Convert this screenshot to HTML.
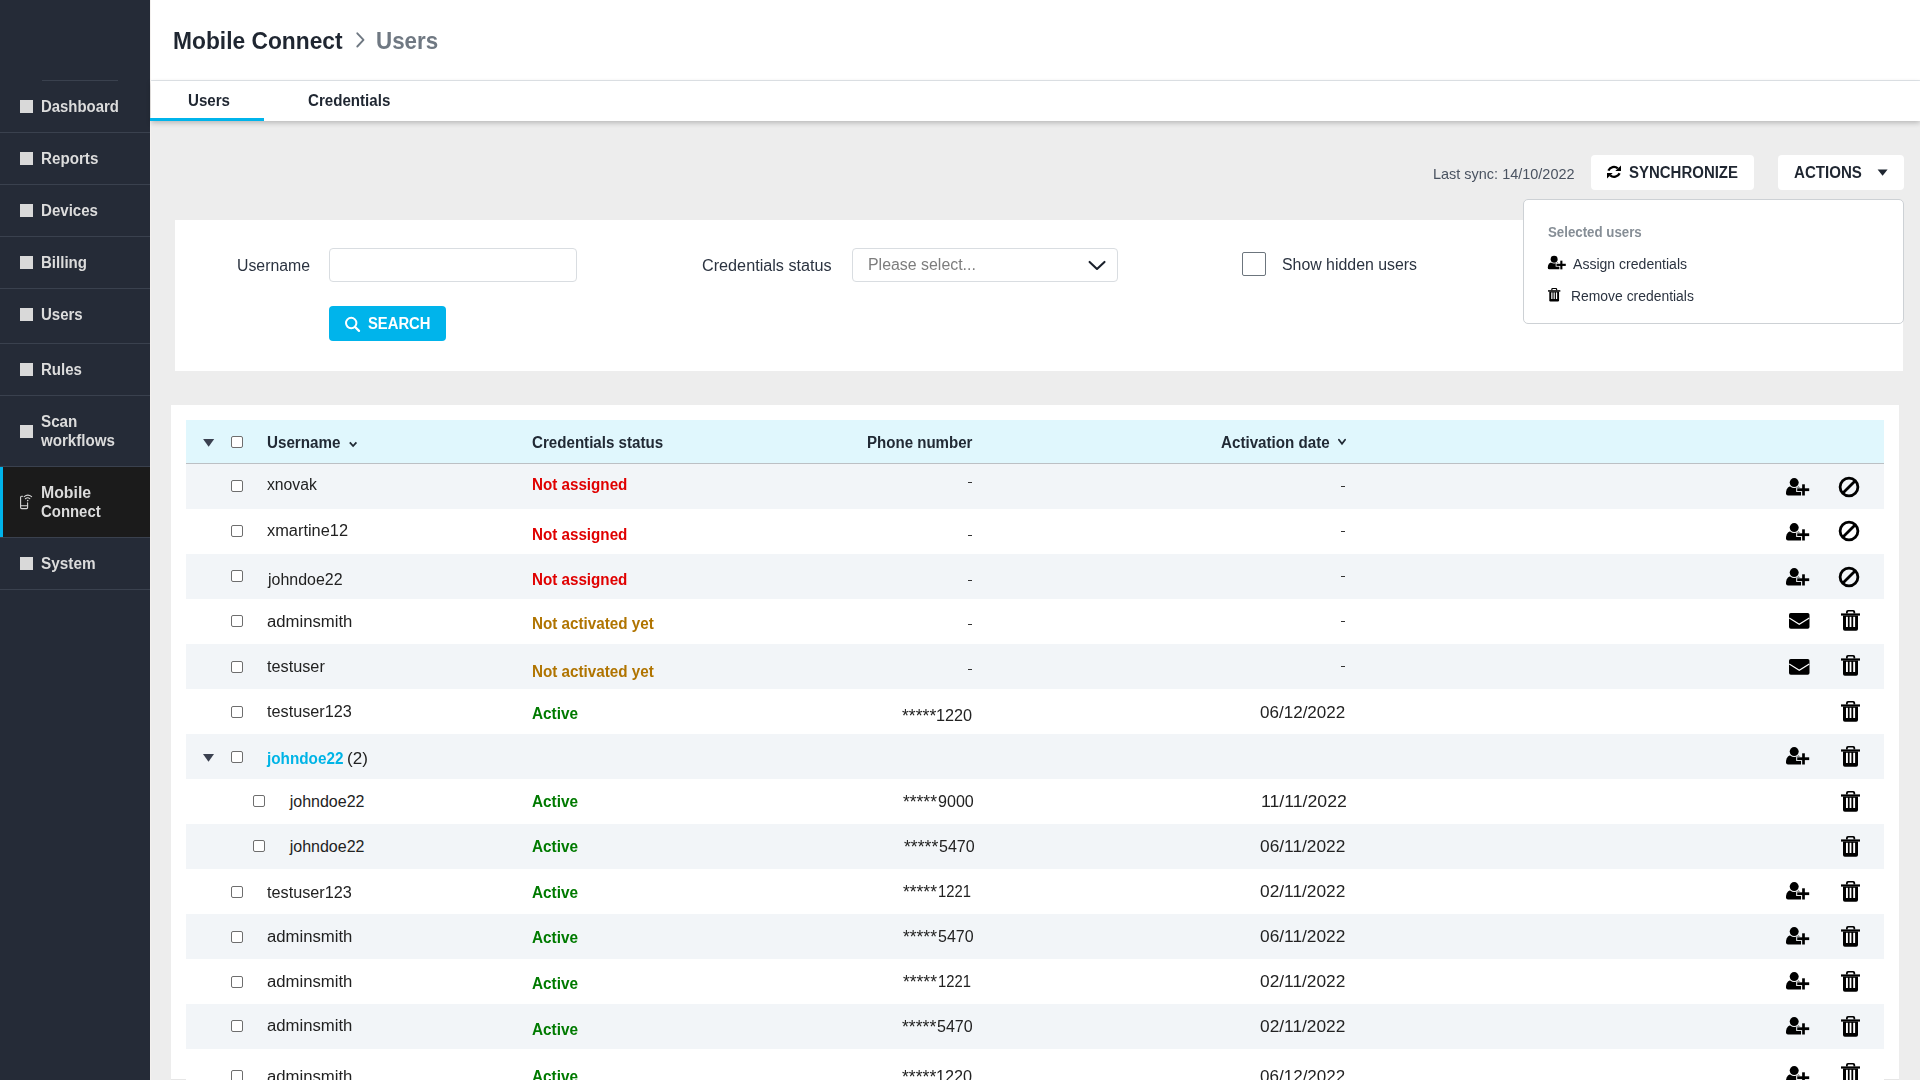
<!DOCTYPE html>
<html><head><meta charset="utf-8"><title>Mobile Connect - Users</title>
<style>
html,body{margin:0;padding:0;width:1920px;height:1080px;overflow:hidden;background:#ededed;font-family:"Liberation Sans",sans-serif;}
</style></head><body>
<div style="position:absolute;left:0px;top:0px;width:150px;height:1080px;background:#252b37;"></div>
<div style="position:absolute;left:150px;top:0px;width:1px;height:1080px;background:#f4f1ef;"></div>
<div style="position:absolute;left:42px;top:80px;width:76px;height:1px;background:#3a414e;"></div>
<div style="position:absolute;left:0px;top:132px;width:150px;height:1px;background:#3a414e;"></div>
<div style="position:absolute;left:0px;top:184px;width:150px;height:1px;background:#3a414e;"></div>
<div style="position:absolute;left:0px;top:236px;width:150px;height:1px;background:#3a414e;"></div>
<div style="position:absolute;left:0px;top:288px;width:150px;height:1px;background:#3a414e;"></div>
<div style="position:absolute;left:0px;top:343px;width:150px;height:1px;background:#3a414e;"></div>
<div style="position:absolute;left:0px;top:395px;width:150px;height:1px;background:#3a414e;"></div>
<div style="position:absolute;left:0px;top:466px;width:150px;height:1px;background:#3a414e;"></div>
<div style="position:absolute;left:0px;top:537px;width:150px;height:1px;background:#3a414e;"></div>
<div style="position:absolute;left:0px;top:589px;width:150px;height:1px;background:#3a414e;"></div>
<div style="position:absolute;left:0px;top:467px;width:150px;height:70px;background:#1b1b1b;"></div>
<div style="position:absolute;left:0px;top:467px;width:3px;height:70px;background:#00b4eb;"></div>
<div style="position:absolute;left:20px;top:100px;width:13px;height:13px;background:#d9d9d9;"></div>
<div style="position:absolute;left:20px;top:152px;width:13px;height:13px;background:#d9d9d9;"></div>
<div style="position:absolute;left:20px;top:204px;width:13px;height:13px;background:#d9d9d9;"></div>
<div style="position:absolute;left:20px;top:256px;width:13px;height:13px;background:#d9d9d9;"></div>
<div style="position:absolute;left:20px;top:308px;width:13px;height:13px;background:#d9d9d9;"></div>
<div style="position:absolute;left:20px;top:363px;width:13px;height:13px;background:#d9d9d9;"></div>
<div style="position:absolute;left:20px;top:425px;width:13px;height:13px;background:#d9d9d9;"></div>
<div style="position:absolute;left:20px;top:557px;width:13px;height:13px;background:#d9d9d9;"></div>
<svg style="position:absolute;left:14px;top:488px;" width="26" height="26" viewBox="0 0 26 26"><g fill="none" stroke="#d6d6d6" stroke-width="1.1" stroke-linecap="round"><path d="M8.6 8.3 H7.6 Q6.6 8.3 6.6 9.3 V19.6 Q6.6 20.6 7.6 20.6 H12.6 Q13.6 20.6 13.6 19.6 V14.8"/><path d="M6.6 17.8 H13.6"/><path d="M10.2 8.6 Q13.8 5.6 17.6 8.6"/><path d="M11.4 10.7 Q13.7 8.9 15.8 10.7"/></g><circle cx="13.7" cy="12.6" r="0.8" fill="#d6d6d6"/></svg>
<div style="position:absolute;left:151px;top:0px;width:1769px;height:80px;background:#ffffff;"></div>
<div style="position:absolute;left:151px;top:80px;width:1769px;height:1px;background:#e2e7eb;"></div>
<svg style="position:absolute;left:350px;top:30px;" width="20" height="24" viewBox="0 0 20 24"><polyline points="7.3,3.3 13.5,9.9 7.3,16.5" fill="none" stroke="#6f7882" stroke-width="1.9" stroke-linecap="round" stroke-linejoin="round"/></svg>
<div style="position:absolute;left:151px;top:81px;width:1769px;height:40px;background:#ffffff;box-shadow:0 2px 5px rgba(0,0,0,0.22);"></div>
<div style="position:absolute;left:150px;top:118px;width:114px;height:3px;background:#00b4eb;"></div>
<div style="position:absolute;left:1591px;top:155px;width:163px;height:35px;background:#ffffff;border-radius:4px;"></div>
<svg style="position:absolute;left:1605px;top:163px;" width="18" height="18" viewBox="0 0 18 18"><g transform="translate(2,2)"><path d="M1.4 5.6 A6 6 0 0 1 10.8 3.4" fill="none" stroke="#000" stroke-width="2.3"/><polygon points="8.3,5.9 14,5.9 14,0.6" fill="#000"/><path d="M12.6 8.2 A6 6 0 0 1 3.2 10.4" fill="none" stroke="#000" stroke-width="2.3"/><polygon points="5.7,7.9 0,7.9 0,13.4" fill="#000"/></g></svg>
<div style="position:absolute;left:1778px;top:155px;width:126px;height:35px;background:#ffffff;border-radius:4px;"></div>
<svg style="position:absolute;left:1876px;top:168px;" width="13" height="9" viewBox="0 0 13 9"><polygon points="1.6,1.6 11.6,1.6 6.6,7.8" fill="#1f2631"/></svg>
<div style="position:absolute;left:175px;top:220px;width:1728px;height:151px;background:#ffffff;"></div>
<div style="position:absolute;left:329px;top:248px;width:248px;height:34px;background:#ffffff;box-sizing:border-box;border:1px solid #d9dde1;border-radius:4px;"></div>
<div style="position:absolute;left:329px;top:306px;width:117px;height:35px;background:#00b4eb;border-radius:4px;"></div>
<svg style="position:absolute;left:340px;top:312px;" width="24" height="24" viewBox="0 0 24 24"><circle cx="11.2" cy="11.05" r="5.2" fill="none" stroke="#fff" stroke-width="2"/><line x1="15.1" y1="15.0" x2="19" y2="18.9" stroke="#fff" stroke-width="2.3" stroke-linecap="round"/></svg>
<div style="position:absolute;left:852px;top:248px;width:266px;height:34px;background:#ffffff;box-sizing:border-box;border:1px solid #d9dde1;border-radius:4px;"></div>
<svg style="position:absolute;left:1084px;top:254px;" width="26" height="22" viewBox="0 0 26 22"><polyline points="5.6,7.9 13,15 20.5,7.9" fill="none" stroke="#1a202b" stroke-width="2.1" stroke-linecap="round" stroke-linejoin="round"/></svg>
<div style="position:absolute;left:1242px;top:252px;width:24px;height:24px;background:#ffffff;box-sizing:border-box;border:1px solid #6c757d;border-radius:2px;"></div>
<div style="position:absolute;left:1523px;top:199px;width:381px;height:125px;background:#ffffff;box-sizing:border-box;border:1px solid #cdd1d5;border-radius:5px;"></div>
<div style="position:absolute;left:171px;top:405px;width:1728px;height:675px;background:#ffffff;"></div>
<div style="position:absolute;left:186px;top:420px;width:1698px;height:43px;background:#e0f7fd;"></div>
<div style="position:absolute;left:186px;top:463px;width:1698px;height:1px;background:#bcc0c4;"></div>
<div style="position:absolute;left:186px;top:464px;width:1698px;height:45px;background:#f2f5f8;"></div>
<div style="position:absolute;left:186px;top:554px;width:1698px;height:45px;background:#f2f5f8;"></div>
<div style="position:absolute;left:186px;top:644px;width:1698px;height:45px;background:#f2f5f8;"></div>
<div style="position:absolute;left:186px;top:734px;width:1698px;height:45px;background:#f2f5f8;"></div>
<div style="position:absolute;left:186px;top:824px;width:1698px;height:45px;background:#f2f5f8;"></div>
<div style="position:absolute;left:186px;top:914px;width:1698px;height:45px;background:#f2f5f8;"></div>
<div style="position:absolute;left:186px;top:1004px;width:1698px;height:45px;background:#f2f5f8;"></div>
<div style="position:absolute;left:171px;top:1079px;width:15px;height:1px;background:#e6e6e6;"></div>
<div style="position:absolute;left:1884px;top:1079px;width:15px;height:1px;background:#e6e6e6;"></div>
<svg style="position:absolute;left:200px;top:436px;" width="18" height="14" viewBox="0 0 18 14"><polygon points="3.1,3 14.2,3 8.65,10.8" fill="#3b4150"/></svg>
<svg style="position:absolute;left:346px;top:438px;" width="14" height="12" viewBox="0 0 14 12"><polyline points="3.8,4.3 7.1,8 10.4,4.3" fill="none" stroke="#212a35" stroke-width="1.8"/></svg>
<svg style="position:absolute;left:1335px;top:436px;" width="14" height="12" viewBox="0 0 14 12"><polyline points="3.9,3.8 7.0,7.7 10.1,3.8" fill="none" stroke="#212a35" stroke-width="1.8" stroke-linecap="round"/></svg>
<div style="position:absolute;left:231px;top:436px;width:12px;height:12px;background:#ffffff;box-sizing:border-box;border:1.3px solid #6e6e6e;border-radius:2px;"></div>
<div style="position:absolute;left:231px;top:480px;width:12px;height:12px;background:#ffffff;box-sizing:border-box;border:1.3px solid #6e6e6e;border-radius:2px;"></div>
<div style="position:absolute;left:968px;top:482px;width:4px;height:1.4px;background:#333333;"></div>
<div style="position:absolute;left:1341px;top:486px;width:4px;height:1.4px;background:#333333;"></div>
<div style="position:absolute;left:231px;top:525px;width:12px;height:12px;background:#ffffff;box-sizing:border-box;border:1.3px solid #6e6e6e;border-radius:2px;"></div>
<div style="position:absolute;left:968px;top:535px;width:4px;height:1.4px;background:#333333;"></div>
<div style="position:absolute;left:1341px;top:531px;width:4px;height:1.4px;background:#333333;"></div>
<div style="position:absolute;left:231px;top:570px;width:12px;height:12px;background:#ffffff;box-sizing:border-box;border:1.3px solid #6e6e6e;border-radius:2px;"></div>
<div style="position:absolute;left:968px;top:580px;width:4px;height:1.4px;background:#333333;"></div>
<div style="position:absolute;left:1341px;top:576px;width:4px;height:1.4px;background:#333333;"></div>
<div style="position:absolute;left:231px;top:615px;width:12px;height:12px;background:#ffffff;box-sizing:border-box;border:1.3px solid #6e6e6e;border-radius:2px;"></div>
<div style="position:absolute;left:968px;top:624px;width:4px;height:1.4px;background:#333333;"></div>
<div style="position:absolute;left:1341px;top:621px;width:4px;height:1.4px;background:#333333;"></div>
<div style="position:absolute;left:231px;top:661px;width:12px;height:12px;background:#ffffff;box-sizing:border-box;border:1.3px solid #6e6e6e;border-radius:2px;"></div>
<div style="position:absolute;left:968px;top:669px;width:4px;height:1.4px;background:#333333;"></div>
<div style="position:absolute;left:1341px;top:666px;width:4px;height:1.4px;background:#333333;"></div>
<div style="position:absolute;left:231px;top:706px;width:12px;height:12px;background:#ffffff;box-sizing:border-box;border:1.3px solid #6e6e6e;border-radius:2px;"></div>
<div style="position:absolute;left:253px;top:795px;width:12px;height:12px;background:#ffffff;box-sizing:border-box;border:1.3px solid #6e6e6e;border-radius:2px;"></div>
<div style="position:absolute;left:253px;top:840px;width:12px;height:12px;background:#ffffff;box-sizing:border-box;border:1.3px solid #6e6e6e;border-radius:2px;"></div>
<div style="position:absolute;left:231px;top:886px;width:12px;height:12px;background:#ffffff;box-sizing:border-box;border:1.3px solid #6e6e6e;border-radius:2px;"></div>
<div style="position:absolute;left:231px;top:931px;width:12px;height:12px;background:#ffffff;box-sizing:border-box;border:1.3px solid #6e6e6e;border-radius:2px;"></div>
<div style="position:absolute;left:231px;top:976px;width:12px;height:12px;background:#ffffff;box-sizing:border-box;border:1.3px solid #6e6e6e;border-radius:2px;"></div>
<div style="position:absolute;left:231px;top:1020px;width:12px;height:12px;background:#ffffff;box-sizing:border-box;border:1.3px solid #6e6e6e;border-radius:2px;"></div>
<div style="position:absolute;left:231px;top:1070px;width:12px;height:12px;background:#ffffff;box-sizing:border-box;border:1.3px solid #6e6e6e;border-radius:2px;"></div>
<svg style="position:absolute;left:200px;top:750px;" width="18" height="14" viewBox="0 0 18 14"><polygon points="3,4 14,4 8.5,11.8" fill="#3b4150"/></svg>
<div style="position:absolute;left:231px;top:751px;width:12px;height:12px;background:#ffffff;box-sizing:border-box;border:1.3px solid #6e6e6e;border-radius:2px;"></div>
<svg style="position:absolute;left:1547.224px;top:254.724px;" width="20.176000000000002" height="15.52" viewBox="0 0 20.176000000000002 15.52"><defs><mask id="m15480_2555" maskUnits="userSpaceOnUse" x="0" y="0" width="26" height="20"><rect width="26" height="20" fill="#fff"/><rect x="16.2" y="6.3" width="4.5" height="14" fill="#000"/><rect x="11.2" y="10.4" width="14.6" height="4.6" fill="#000"/><circle cx="9.2" cy="5.6" r="5.4" fill="#000"/></mask></defs><g transform="scale(0.776)"><circle cx="9.2" cy="5.6" r="4.5" fill="#000"/><path mask="url(#m15480_2555)" d="M1 16.4 C1 12 3 9.3 6.6 9.3 L11.6 9.3 C14.4 9.3 16.3 11 16.3 13.4 L16.3 18.5 L3 18.5 Q1 18.5 1 16.4 Z" fill="#000"/><rect x="17.15" y="7.3" width="2.7" height="11.2" fill="#000"/><rect x="12.2" y="11.3" width="12" height="2.8" fill="#000"/></g></svg>
<svg style="position:absolute;left:1548.2px;top:288px;" width="12.35" height="13.65" viewBox="0 0 12.35 13.65"><g transform="scale(0.65)"><path d="M5 3.6 V2 Q5 0 7 0 H12.2 Q14.2 0 14.2 2 V3.6 H12.4 V2.2 Q12.4 1.4 11.6 1.4 H7.6 Q6.8 1.4 6.8 2.2 V3.6 Z" fill="#000"/><rect x="0" y="3.4" width="19" height="2.2" fill="#000"/><path d="M2 5.4 H17 V19 Q17 20.8 15.2 20.8 H3.8 Q2 20.8 2 19 Z" fill="#000"/><rect x="5" y="6.8" width="1.9" height="10.2" fill="#fff"/><rect x="8.6" y="6.8" width="1.8" height="10.2" fill="#fff"/><rect x="12.2" y="6.8" width="1.9" height="10.2" fill="#fff"/></g></svg>
<svg style="position:absolute;left:1784.8px;top:476.9px;" width="26.0" height="20.0" viewBox="0 0 26.0 20.0"><defs><mask id="m17858_4779" maskUnits="userSpaceOnUse" x="0" y="0" width="26" height="20"><rect width="26" height="20" fill="#fff"/><rect x="16.2" y="6.3" width="4.5" height="14" fill="#000"/><rect x="11.2" y="10.4" width="14.6" height="4.6" fill="#000"/><circle cx="9.2" cy="5.6" r="5.4" fill="#000"/></mask></defs><g transform="scale(1.0)"><circle cx="9.2" cy="5.6" r="4.5" fill="#000"/><path mask="url(#m17858_4779)" d="M1 16.4 C1 12 3 9.3 6.6 9.3 L11.6 9.3 C14.4 9.3 16.3 11 16.3 13.4 L16.3 18.5 L3 18.5 Q1 18.5 1 16.4 Z" fill="#000"/><rect x="17.15" y="7.3" width="2.7" height="11.2" fill="#000"/><rect x="12.2" y="11.3" width="12" height="2.8" fill="#000"/></g></svg>
<svg style="position:absolute;left:1837.3px;top:475.4px;" width="24" height="24" viewBox="0 0 24 24"><circle cx="12" cy="12" r="8.9" fill="none" stroke="#000" stroke-width="2.8"/><line x1="18.3" y1="5.7" x2="5.7" y2="18.3" stroke="#000" stroke-width="2.8"/></svg>
<svg style="position:absolute;left:1784.8px;top:521.9px;" width="26.0" height="20.0" viewBox="0 0 26.0 20.0"><defs><mask id="m17858_5229" maskUnits="userSpaceOnUse" x="0" y="0" width="26" height="20"><rect width="26" height="20" fill="#fff"/><rect x="16.2" y="6.3" width="4.5" height="14" fill="#000"/><rect x="11.2" y="10.4" width="14.6" height="4.6" fill="#000"/><circle cx="9.2" cy="5.6" r="5.4" fill="#000"/></mask></defs><g transform="scale(1.0)"><circle cx="9.2" cy="5.6" r="4.5" fill="#000"/><path mask="url(#m17858_5229)" d="M1 16.4 C1 12 3 9.3 6.6 9.3 L11.6 9.3 C14.4 9.3 16.3 11 16.3 13.4 L16.3 18.5 L3 18.5 Q1 18.5 1 16.4 Z" fill="#000"/><rect x="17.15" y="7.3" width="2.7" height="11.2" fill="#000"/><rect x="12.2" y="11.3" width="12" height="2.8" fill="#000"/></g></svg>
<svg style="position:absolute;left:1837.3px;top:519.3px;" width="24" height="24" viewBox="0 0 24 24"><circle cx="12" cy="12" r="8.9" fill="none" stroke="#000" stroke-width="2.8"/><line x1="18.3" y1="5.7" x2="5.7" y2="18.3" stroke="#000" stroke-width="2.8"/></svg>
<svg style="position:absolute;left:1784.8px;top:566.9px;" width="26.0" height="20.0" viewBox="0 0 26.0 20.0"><defs><mask id="m17858_5679" maskUnits="userSpaceOnUse" x="0" y="0" width="26" height="20"><rect width="26" height="20" fill="#fff"/><rect x="16.2" y="6.3" width="4.5" height="14" fill="#000"/><rect x="11.2" y="10.4" width="14.6" height="4.6" fill="#000"/><circle cx="9.2" cy="5.6" r="5.4" fill="#000"/></mask></defs><g transform="scale(1.0)"><circle cx="9.2" cy="5.6" r="4.5" fill="#000"/><path mask="url(#m17858_5679)" d="M1 16.4 C1 12 3 9.3 6.6 9.3 L11.6 9.3 C14.4 9.3 16.3 11 16.3 13.4 L16.3 18.5 L3 18.5 Q1 18.5 1 16.4 Z" fill="#000"/><rect x="17.15" y="7.3" width="2.7" height="11.2" fill="#000"/><rect x="12.2" y="11.3" width="12" height="2.8" fill="#000"/></g></svg>
<svg style="position:absolute;left:1837.3px;top:565.4px;" width="24" height="24" viewBox="0 0 24 24"><circle cx="12" cy="12" r="8.9" fill="none" stroke="#000" stroke-width="2.8"/><line x1="18.3" y1="5.7" x2="5.7" y2="18.3" stroke="#000" stroke-width="2.8"/></svg>
<svg style="position:absolute;left:1788.75px;top:612.5px;" width="21" height="16" viewBox="0 0 21 16"><rect x="0" y="0" width="20.5" height="15.8" rx="1.8" fill="#000"/><polyline points="0.2,5 10.25,11.3 20.3,5" fill="none" stroke="#fff" stroke-width="1.2"/></svg>
<svg style="position:absolute;left:1841px;top:610px;" width="19.0" height="21.0" viewBox="0 0 19.0 21.0"><g transform="scale(1.0)"><path d="M5 3.6 V2 Q5 0 7 0 H12.2 Q14.2 0 14.2 2 V3.6 H12.4 V2.2 Q12.4 1.4 11.6 1.4 H7.6 Q6.8 1.4 6.8 2.2 V3.6 Z" fill="#000"/><rect x="0" y="3.4" width="19" height="2.2" fill="#000"/><path d="M2 5.4 H17 V19 Q17 20.8 15.2 20.8 H3.8 Q2 20.8 2 19 Z" fill="#000"/><rect x="5" y="6.8" width="1.9" height="10.2" fill="#fff"/><rect x="8.6" y="6.8" width="1.8" height="10.2" fill="#fff"/><rect x="12.2" y="6.8" width="1.9" height="10.2" fill="#fff"/></g></svg>
<svg style="position:absolute;left:1788.75px;top:658.75px;" width="21" height="16" viewBox="0 0 21 16"><rect x="0" y="0" width="20.5" height="15.8" rx="1.8" fill="#000"/><polyline points="0.2,5 10.25,11.3 20.3,5" fill="none" stroke="#fff" stroke-width="1.2"/></svg>
<svg style="position:absolute;left:1841px;top:655px;" width="19.0" height="21.0" viewBox="0 0 19.0 21.0"><g transform="scale(1.0)"><path d="M5 3.6 V2 Q5 0 7 0 H12.2 Q14.2 0 14.2 2 V3.6 H12.4 V2.2 Q12.4 1.4 11.6 1.4 H7.6 Q6.8 1.4 6.8 2.2 V3.6 Z" fill="#000"/><rect x="0" y="3.4" width="19" height="2.2" fill="#000"/><path d="M2 5.4 H17 V19 Q17 20.8 15.2 20.8 H3.8 Q2 20.8 2 19 Z" fill="#000"/><rect x="5" y="6.8" width="1.9" height="10.2" fill="#fff"/><rect x="8.6" y="6.8" width="1.8" height="10.2" fill="#fff"/><rect x="12.2" y="6.8" width="1.9" height="10.2" fill="#fff"/></g></svg>
<svg style="position:absolute;left:1841px;top:700.8px;" width="19.0" height="21.0" viewBox="0 0 19.0 21.0"><g transform="scale(1.0)"><path d="M5 3.6 V2 Q5 0 7 0 H12.2 Q14.2 0 14.2 2 V3.6 H12.4 V2.2 Q12.4 1.4 11.6 1.4 H7.6 Q6.8 1.4 6.8 2.2 V3.6 Z" fill="#000"/><rect x="0" y="3.4" width="19" height="2.2" fill="#000"/><path d="M2 5.4 H17 V19 Q17 20.8 15.2 20.8 H3.8 Q2 20.8 2 19 Z" fill="#000"/><rect x="5" y="6.8" width="1.9" height="10.2" fill="#fff"/><rect x="8.6" y="6.8" width="1.8" height="10.2" fill="#fff"/><rect x="12.2" y="6.8" width="1.9" height="10.2" fill="#fff"/></g></svg>
<svg style="position:absolute;left:1785.0px;top:746.1px;" width="26.0" height="20.0" viewBox="0 0 26.0 20.0"><defs><mask id="m17860_7471" maskUnits="userSpaceOnUse" x="0" y="0" width="26" height="20"><rect width="26" height="20" fill="#fff"/><rect x="16.2" y="6.3" width="4.5" height="14" fill="#000"/><rect x="11.2" y="10.4" width="14.6" height="4.6" fill="#000"/><circle cx="9.2" cy="5.6" r="5.4" fill="#000"/></mask></defs><g transform="scale(1.0)"><circle cx="9.2" cy="5.6" r="4.5" fill="#000"/><path mask="url(#m17860_7471)" d="M1 16.4 C1 12 3 9.3 6.6 9.3 L11.6 9.3 C14.4 9.3 16.3 11 16.3 13.4 L16.3 18.5 L3 18.5 Q1 18.5 1 16.4 Z" fill="#000"/><rect x="17.15" y="7.3" width="2.7" height="11.2" fill="#000"/><rect x="12.2" y="11.3" width="12" height="2.8" fill="#000"/></g></svg>
<svg style="position:absolute;left:1841px;top:746px;" width="19.0" height="21.0" viewBox="0 0 19.0 21.0"><g transform="scale(1.0)"><path d="M5 3.6 V2 Q5 0 7 0 H12.2 Q14.2 0 14.2 2 V3.6 H12.4 V2.2 Q12.4 1.4 11.6 1.4 H7.6 Q6.8 1.4 6.8 2.2 V3.6 Z" fill="#000"/><rect x="0" y="3.4" width="19" height="2.2" fill="#000"/><path d="M2 5.4 H17 V19 Q17 20.8 15.2 20.8 H3.8 Q2 20.8 2 19 Z" fill="#000"/><rect x="5" y="6.8" width="1.9" height="10.2" fill="#fff"/><rect x="8.6" y="6.8" width="1.8" height="10.2" fill="#fff"/><rect x="12.2" y="6.8" width="1.9" height="10.2" fill="#fff"/></g></svg>
<svg style="position:absolute;left:1841px;top:791px;" width="19.0" height="21.0" viewBox="0 0 19.0 21.0"><g transform="scale(1.0)"><path d="M5 3.6 V2 Q5 0 7 0 H12.2 Q14.2 0 14.2 2 V3.6 H12.4 V2.2 Q12.4 1.4 11.6 1.4 H7.6 Q6.8 1.4 6.8 2.2 V3.6 Z" fill="#000"/><rect x="0" y="3.4" width="19" height="2.2" fill="#000"/><path d="M2 5.4 H17 V19 Q17 20.8 15.2 20.8 H3.8 Q2 20.8 2 19 Z" fill="#000"/><rect x="5" y="6.8" width="1.9" height="10.2" fill="#fff"/><rect x="8.6" y="6.8" width="1.8" height="10.2" fill="#fff"/><rect x="12.2" y="6.8" width="1.9" height="10.2" fill="#fff"/></g></svg>
<svg style="position:absolute;left:1841px;top:836px;" width="19.0" height="21.0" viewBox="0 0 19.0 21.0"><g transform="scale(1.0)"><path d="M5 3.6 V2 Q5 0 7 0 H12.2 Q14.2 0 14.2 2 V3.6 H12.4 V2.2 Q12.4 1.4 11.6 1.4 H7.6 Q6.8 1.4 6.8 2.2 V3.6 Z" fill="#000"/><rect x="0" y="3.4" width="19" height="2.2" fill="#000"/><path d="M2 5.4 H17 V19 Q17 20.8 15.2 20.8 H3.8 Q2 20.8 2 19 Z" fill="#000"/><rect x="5" y="6.8" width="1.9" height="10.2" fill="#fff"/><rect x="8.6" y="6.8" width="1.8" height="10.2" fill="#fff"/><rect x="12.2" y="6.8" width="1.9" height="10.2" fill="#fff"/></g></svg>
<svg style="position:absolute;left:1785.0px;top:881.1px;" width="26.0" height="20.0" viewBox="0 0 26.0 20.0"><defs><mask id="m17860_8821" maskUnits="userSpaceOnUse" x="0" y="0" width="26" height="20"><rect width="26" height="20" fill="#fff"/><rect x="16.2" y="6.3" width="4.5" height="14" fill="#000"/><rect x="11.2" y="10.4" width="14.6" height="4.6" fill="#000"/><circle cx="9.2" cy="5.6" r="5.4" fill="#000"/></mask></defs><g transform="scale(1.0)"><circle cx="9.2" cy="5.6" r="4.5" fill="#000"/><path mask="url(#m17860_8821)" d="M1 16.4 C1 12 3 9.3 6.6 9.3 L11.6 9.3 C14.4 9.3 16.3 11 16.3 13.4 L16.3 18.5 L3 18.5 Q1 18.5 1 16.4 Z" fill="#000"/><rect x="17.15" y="7.3" width="2.7" height="11.2" fill="#000"/><rect x="12.2" y="11.3" width="12" height="2.8" fill="#000"/></g></svg>
<svg style="position:absolute;left:1841px;top:881px;" width="19.0" height="21.0" viewBox="0 0 19.0 21.0"><g transform="scale(1.0)"><path d="M5 3.6 V2 Q5 0 7 0 H12.2 Q14.2 0 14.2 2 V3.6 H12.4 V2.2 Q12.4 1.4 11.6 1.4 H7.6 Q6.8 1.4 6.8 2.2 V3.6 Z" fill="#000"/><rect x="0" y="3.4" width="19" height="2.2" fill="#000"/><path d="M2 5.4 H17 V19 Q17 20.8 15.2 20.8 H3.8 Q2 20.8 2 19 Z" fill="#000"/><rect x="5" y="6.8" width="1.9" height="10.2" fill="#fff"/><rect x="8.6" y="6.8" width="1.8" height="10.2" fill="#fff"/><rect x="12.2" y="6.8" width="1.9" height="10.2" fill="#fff"/></g></svg>
<svg style="position:absolute;left:1785.0px;top:926.1px;" width="26.0" height="20.0" viewBox="0 0 26.0 20.0"><defs><mask id="m17860_9271" maskUnits="userSpaceOnUse" x="0" y="0" width="26" height="20"><rect width="26" height="20" fill="#fff"/><rect x="16.2" y="6.3" width="4.5" height="14" fill="#000"/><rect x="11.2" y="10.4" width="14.6" height="4.6" fill="#000"/><circle cx="9.2" cy="5.6" r="5.4" fill="#000"/></mask></defs><g transform="scale(1.0)"><circle cx="9.2" cy="5.6" r="4.5" fill="#000"/><path mask="url(#m17860_9271)" d="M1 16.4 C1 12 3 9.3 6.6 9.3 L11.6 9.3 C14.4 9.3 16.3 11 16.3 13.4 L16.3 18.5 L3 18.5 Q1 18.5 1 16.4 Z" fill="#000"/><rect x="17.15" y="7.3" width="2.7" height="11.2" fill="#000"/><rect x="12.2" y="11.3" width="12" height="2.8" fill="#000"/></g></svg>
<svg style="position:absolute;left:1841px;top:926px;" width="19.0" height="21.0" viewBox="0 0 19.0 21.0"><g transform="scale(1.0)"><path d="M5 3.6 V2 Q5 0 7 0 H12.2 Q14.2 0 14.2 2 V3.6 H12.4 V2.2 Q12.4 1.4 11.6 1.4 H7.6 Q6.8 1.4 6.8 2.2 V3.6 Z" fill="#000"/><rect x="0" y="3.4" width="19" height="2.2" fill="#000"/><path d="M2 5.4 H17 V19 Q17 20.8 15.2 20.8 H3.8 Q2 20.8 2 19 Z" fill="#000"/><rect x="5" y="6.8" width="1.9" height="10.2" fill="#fff"/><rect x="8.6" y="6.8" width="1.8" height="10.2" fill="#fff"/><rect x="12.2" y="6.8" width="1.9" height="10.2" fill="#fff"/></g></svg>
<svg style="position:absolute;left:1785.0px;top:971.1px;" width="26.0" height="20.0" viewBox="0 0 26.0 20.0"><defs><mask id="m17860_9721" maskUnits="userSpaceOnUse" x="0" y="0" width="26" height="20"><rect width="26" height="20" fill="#fff"/><rect x="16.2" y="6.3" width="4.5" height="14" fill="#000"/><rect x="11.2" y="10.4" width="14.6" height="4.6" fill="#000"/><circle cx="9.2" cy="5.6" r="5.4" fill="#000"/></mask></defs><g transform="scale(1.0)"><circle cx="9.2" cy="5.6" r="4.5" fill="#000"/><path mask="url(#m17860_9721)" d="M1 16.4 C1 12 3 9.3 6.6 9.3 L11.6 9.3 C14.4 9.3 16.3 11 16.3 13.4 L16.3 18.5 L3 18.5 Q1 18.5 1 16.4 Z" fill="#000"/><rect x="17.15" y="7.3" width="2.7" height="11.2" fill="#000"/><rect x="12.2" y="11.3" width="12" height="2.8" fill="#000"/></g></svg>
<svg style="position:absolute;left:1841px;top:971px;" width="19.0" height="21.0" viewBox="0 0 19.0 21.0"><g transform="scale(1.0)"><path d="M5 3.6 V2 Q5 0 7 0 H12.2 Q14.2 0 14.2 2 V3.6 H12.4 V2.2 Q12.4 1.4 11.6 1.4 H7.6 Q6.8 1.4 6.8 2.2 V3.6 Z" fill="#000"/><rect x="0" y="3.4" width="19" height="2.2" fill="#000"/><path d="M2 5.4 H17 V19 Q17 20.8 15.2 20.8 H3.8 Q2 20.8 2 19 Z" fill="#000"/><rect x="5" y="6.8" width="1.9" height="10.2" fill="#fff"/><rect x="8.6" y="6.8" width="1.8" height="10.2" fill="#fff"/><rect x="12.2" y="6.8" width="1.9" height="10.2" fill="#fff"/></g></svg>
<svg style="position:absolute;left:1785.0px;top:1016.0px;" width="26.0" height="20.0" viewBox="0 0 26.0 20.0"><defs><mask id="m17860_10170" maskUnits="userSpaceOnUse" x="0" y="0" width="26" height="20"><rect width="26" height="20" fill="#fff"/><rect x="16.2" y="6.3" width="4.5" height="14" fill="#000"/><rect x="11.2" y="10.4" width="14.6" height="4.6" fill="#000"/><circle cx="9.2" cy="5.6" r="5.4" fill="#000"/></mask></defs><g transform="scale(1.0)"><circle cx="9.2" cy="5.6" r="4.5" fill="#000"/><path mask="url(#m17860_10170)" d="M1 16.4 C1 12 3 9.3 6.6 9.3 L11.6 9.3 C14.4 9.3 16.3 11 16.3 13.4 L16.3 18.5 L3 18.5 Q1 18.5 1 16.4 Z" fill="#000"/><rect x="17.15" y="7.3" width="2.7" height="11.2" fill="#000"/><rect x="12.2" y="11.3" width="12" height="2.8" fill="#000"/></g></svg>
<svg style="position:absolute;left:1841px;top:1016px;" width="19.0" height="21.0" viewBox="0 0 19.0 21.0"><g transform="scale(1.0)"><path d="M5 3.6 V2 Q5 0 7 0 H12.2 Q14.2 0 14.2 2 V3.6 H12.4 V2.2 Q12.4 1.4 11.6 1.4 H7.6 Q6.8 1.4 6.8 2.2 V3.6 Z" fill="#000"/><rect x="0" y="3.4" width="19" height="2.2" fill="#000"/><path d="M2 5.4 H17 V19 Q17 20.8 15.2 20.8 H3.8 Q2 20.8 2 19 Z" fill="#000"/><rect x="5" y="6.8" width="1.9" height="10.2" fill="#fff"/><rect x="8.6" y="6.8" width="1.8" height="10.2" fill="#fff"/><rect x="12.2" y="6.8" width="1.9" height="10.2" fill="#fff"/></g></svg>
<svg style="position:absolute;left:1785.0px;top:1065.0px;" width="26.0" height="20.0" viewBox="0 0 26.0 20.0"><defs><mask id="m17860_10660" maskUnits="userSpaceOnUse" x="0" y="0" width="26" height="20"><rect width="26" height="20" fill="#fff"/><rect x="16.2" y="6.3" width="4.5" height="14" fill="#000"/><rect x="11.2" y="10.4" width="14.6" height="4.6" fill="#000"/><circle cx="9.2" cy="5.6" r="5.4" fill="#000"/></mask></defs><g transform="scale(1.0)"><circle cx="9.2" cy="5.6" r="4.5" fill="#000"/><path mask="url(#m17860_10660)" d="M1 16.4 C1 12 3 9.3 6.6 9.3 L11.6 9.3 C14.4 9.3 16.3 11 16.3 13.4 L16.3 18.5 L3 18.5 Q1 18.5 1 16.4 Z" fill="#000"/><rect x="17.15" y="7.3" width="2.7" height="11.2" fill="#000"/><rect x="12.2" y="11.3" width="12" height="2.8" fill="#000"/></g></svg>
<svg style="position:absolute;left:1841px;top:1063px;" width="19.0" height="21.0" viewBox="0 0 19.0 21.0"><g transform="scale(1.0)"><path d="M5 3.6 V2 Q5 0 7 0 H12.2 Q14.2 0 14.2 2 V3.6 H12.4 V2.2 Q12.4 1.4 11.6 1.4 H7.6 Q6.8 1.4 6.8 2.2 V3.6 Z" fill="#000"/><rect x="0" y="3.4" width="19" height="2.2" fill="#000"/><path d="M2 5.4 H17 V19 Q17 20.8 15.2 20.8 H3.8 Q2 20.8 2 19 Z" fill="#000"/><rect x="5" y="6.8" width="1.9" height="10.2" fill="#fff"/><rect x="8.6" y="6.8" width="1.8" height="10.2" fill="#fff"/><rect x="12.2" y="6.8" width="1.9" height="10.2" fill="#fff"/></g></svg>
<div style="position:absolute;left:40.97px;top:99px;font-size:16px;line-height:16px;font-weight:bold;color:#dcdcdc;white-space:pre;transform:scaleX(0.9325);transform-origin:0 0;">Dashboard</div>
<div style="position:absolute;left:40.75px;top:151px;font-size:16px;line-height:16px;font-weight:bold;color:#dcdcdc;white-space:pre;transform:scaleX(0.9481);transform-origin:0 0;">Reports</div>
<div style="position:absolute;left:40.86px;top:203px;font-size:16px;line-height:16px;font-weight:bold;color:#dcdcdc;white-space:pre;transform:scaleX(0.9424);transform-origin:0 0;">Devices</div>
<div style="position:absolute;left:40.86px;top:255px;font-size:16px;line-height:16px;font-weight:bold;color:#dcdcdc;white-space:pre;transform:scaleX(0.9404);transform-origin:0 0;">Billing</div>
<div style="position:absolute;left:41.10px;top:307px;font-size:16px;line-height:16px;font-weight:bold;color:#dcdcdc;white-space:pre;transform:scaleX(0.9372);transform-origin:0 0;">Users</div>
<div style="position:absolute;left:40.66px;top:362px;font-size:16px;line-height:16px;font-weight:bold;color:#dcdcdc;white-space:pre;transform:scaleX(0.9405);transform-origin:0 0;">Rules</div>
<div style="position:absolute;left:40.92px;top:414px;font-size:16px;line-height:16px;font-weight:bold;color:#dcdcdc;white-space:pre;transform:scaleX(0.9514);transform-origin:0 0;">Scan</div>
<div style="position:absolute;left:41.40px;top:433px;font-size:16px;line-height:16px;font-weight:bold;color:#dcdcdc;white-space:pre;transform:scaleX(0.9445);transform-origin:0 0;">workflows</div>
<div style="position:absolute;left:40.61px;top:485px;font-size:16px;line-height:16px;font-weight:bold;color:#dcdcdc;white-space:pre;transform:scaleX(0.9888);transform-origin:0 0;">Mobile</div>
<div style="position:absolute;left:40.93px;top:504px;font-size:16px;line-height:16px;font-weight:bold;color:#dcdcdc;white-space:pre;transform:scaleX(0.9323);transform-origin:0 0;">Connect</div>
<div style="position:absolute;left:40.92px;top:556px;font-size:16px;line-height:16px;font-weight:bold;color:#dcdcdc;white-space:pre;transform:scaleX(0.9586);transform-origin:0 0;">System</div>
<div style="position:absolute;left:173.38px;top:29px;font-size:24px;line-height:24px;font-weight:bold;color:#1f2631;white-space:pre;transform:scaleX(0.9492);transform-origin:0 0;">Mobile Connect</div>
<div style="position:absolute;left:376.04px;top:29px;font-size:24px;line-height:24px;font-weight:bold;color:#6f7882;white-space:pre;transform:scaleX(0.9318);transform-origin:0 0;">Users</div>
<div style="position:absolute;left:187.59px;top:93px;font-size:16px;line-height:16px;font-weight:bold;color:#1f2631;white-space:pre;transform:scaleX(0.9442);transform-origin:0 0;">Users</div>
<div style="position:absolute;left:308.13px;top:93px;font-size:16px;line-height:16px;font-weight:bold;color:#1f2631;white-space:pre;transform:scaleX(0.9442);transform-origin:0 0;">Credentials</div>
<div style="position:absolute;left:1433.30px;top:167px;font-size:14.5px;line-height:14.5px;font-weight:normal;color:#4a5361;white-space:pre;transform:scaleX(0.9975);transform-origin:0 0;">Last sync: 14/10/2022</div>
<div style="position:absolute;left:1629.13px;top:165px;font-size:16px;line-height:16px;font-weight:bold;color:#1f2631;white-space:pre;transform:scaleX(0.9359);transform-origin:0 0;">SYNCHRONIZE</div>
<div style="position:absolute;left:1794.03px;top:165px;font-size:16px;line-height:16px;font-weight:bold;color:#1f2631;white-space:pre;transform:scaleX(0.9423);transform-origin:0 0;">ACTIONS</div>
<div style="position:absolute;left:236.61px;top:258px;font-size:16px;line-height:16px;font-weight:normal;color:#2b3340;white-space:pre;transform:scaleX(0.9896);transform-origin:0 0;">Username</div>
<div style="position:absolute;left:367.54px;top:316px;font-size:16px;line-height:16px;font-weight:bold;color:#ffffff;white-space:pre;transform:scaleX(0.9242);transform-origin:0 0;">SEARCH</div>
<div style="position:absolute;left:702.14px;top:258px;font-size:16px;line-height:16px;font-weight:normal;color:#2b3340;white-space:pre;transform:scaleX(1.0126);transform-origin:0 0;">Credentials status</div>
<div style="position:absolute;left:867.56px;top:257px;font-size:16px;line-height:16px;font-weight:normal;color:#7d7d7d;white-space:pre;transform:scaleX(0.9943);transform-origin:0 0;">Please select...</div>
<div style="position:absolute;left:1281.76px;top:257px;font-size:16px;line-height:16px;font-weight:normal;color:#2b3340;white-space:pre;transform:scaleX(0.9922);transform-origin:0 0;">Show hidden users</div>
<div style="position:absolute;left:1547.73px;top:225px;font-size:14px;line-height:14px;font-weight:bold;color:#868e96;white-space:pre;transform:scaleX(0.9483);transform-origin:0 0;">Selected users</div>
<div style="position:absolute;left:1572.60px;top:257px;font-size:14px;line-height:14px;font-weight:normal;color:#2b3340;white-space:pre;transform:scaleX(1.0040);transform-origin:0 0;">Assign credentials</div>
<div style="position:absolute;left:1570.61px;top:289px;font-size:14px;line-height:14px;font-weight:normal;color:#2b3340;white-space:pre;transform:scaleX(0.9930);transform-origin:0 0;">Remove credentials</div>
<div style="position:absolute;left:266.79px;top:435px;font-size:16px;line-height:16px;font-weight:bold;color:#212a35;white-space:pre;transform:scaleX(0.9495);transform-origin:0 0;">Username</div>
<div style="position:absolute;left:532.03px;top:435px;font-size:16px;line-height:16px;font-weight:bold;color:#212a35;white-space:pre;transform:scaleX(0.9455);transform-origin:0 0;">Credentials status</div>
<div style="position:absolute;left:866.56px;top:435px;font-size:16px;line-height:16px;font-weight:bold;color:#212a35;white-space:pre;transform:scaleX(0.9414);transform-origin:0 0;">Phone number</div>
<div style="position:absolute;left:1220.93px;top:435px;font-size:16px;line-height:16px;font-weight:bold;color:#212a35;white-space:pre;transform:scaleX(0.9477);transform-origin:0 0;">Activation date</div>
<div style="position:absolute;left:267.15px;top:477px;font-size:16px;line-height:16px;font-weight:normal;color:#222222;white-space:pre;transform:scaleX(0.9831);transform-origin:0 0;">xnovak</div>
<div style="position:absolute;left:531.85px;top:477px;font-size:16px;line-height:16px;font-weight:bold;color:#e00000;white-space:pre;transform:scaleX(0.9492);transform-origin:0 0;">Not assigned</div>
<div style="position:absolute;left:267.14px;top:523px;font-size:16px;line-height:16px;font-weight:normal;color:#222222;white-space:pre;transform:scaleX(1.0236);transform-origin:0 0;">xmartine12</div>
<div style="position:absolute;left:531.85px;top:527px;font-size:16px;line-height:16px;font-weight:bold;color:#e00000;white-space:pre;transform:scaleX(0.9492);transform-origin:0 0;">Not assigned</div>
<div style="position:absolute;left:267.90px;top:572px;font-size:16px;line-height:16px;font-weight:normal;color:#222222;white-space:pre;transform:scaleX(0.9973);transform-origin:0 0;">johndoe22</div>
<div style="position:absolute;left:531.85px;top:572px;font-size:16px;line-height:16px;font-weight:bold;color:#e00000;white-space:pre;transform:scaleX(0.9492);transform-origin:0 0;">Not assigned</div>
<div style="position:absolute;left:266.88px;top:614px;font-size:16px;line-height:16px;font-weight:normal;color:#222222;white-space:pre;transform:scaleX(1.0435);transform-origin:0 0;">adminsmith</div>
<div style="position:absolute;left:531.85px;top:616px;font-size:16px;line-height:16px;font-weight:bold;color:#b07400;white-space:pre;transform:scaleX(0.9512);transform-origin:0 0;">Not activated yet</div>
<div style="position:absolute;left:267.15px;top:659px;font-size:16px;line-height:16px;font-weight:normal;color:#222222;white-space:pre;transform:scaleX(1.0159);transform-origin:0 0;">testuser</div>
<div style="position:absolute;left:531.85px;top:664px;font-size:16px;line-height:16px;font-weight:bold;color:#b07400;white-space:pre;transform:scaleX(0.9512);transform-origin:0 0;">Not activated yet</div>
<div style="position:absolute;left:267.15px;top:704px;font-size:16px;line-height:16px;font-weight:normal;color:#222222;white-space:pre;transform:scaleX(1.0151);transform-origin:0 0;">testuser123</div>
<div style="position:absolute;left:531.52px;top:706px;font-size:16px;line-height:16px;font-weight:bold;color:#007a00;white-space:pre;transform:scaleX(0.9574);transform-origin:0 0;">Active</div>
<div style="position:absolute;left:901.77px;top:706px;font-size:19px;line-height:19px;font-weight:normal;color:#222222;white-space:pre;transform:scaleX(0.9260);transform-origin:0 0;">*****</div>
<div style="position:absolute;left:936.39px;top:708px;font-size:16px;line-height:16px;font-weight:normal;color:#222222;white-space:pre;transform:scaleX(1.0147);transform-origin:0 0;">1220</div>
<div style="position:absolute;left:1260.17px;top:705px;font-size:16px;line-height:16px;font-weight:normal;color:#222222;white-space:pre;transform:scaleX(1.0646);transform-origin:0 0;">06/12/2022</div>
<div style="position:absolute;left:289.70px;top:794px;font-size:16px;line-height:16px;font-weight:normal;color:#222222;white-space:pre;transform:scaleX(1.0000);transform-origin:0 0;">johndoe22</div>
<div style="position:absolute;left:531.52px;top:794px;font-size:16px;line-height:16px;font-weight:bold;color:#007a00;white-space:pre;transform:scaleX(0.9574);transform-origin:0 0;">Active</div>
<div style="position:absolute;left:902.97px;top:792px;font-size:19px;line-height:19px;font-weight:normal;color:#222222;white-space:pre;transform:scaleX(0.9178);transform-origin:0 0;">*****</div>
<div style="position:absolute;left:937.65px;top:794px;font-size:16px;line-height:16px;font-weight:normal;color:#222222;white-space:pre;transform:scaleX(1.0044);transform-origin:0 0;">9000</div>
<div style="position:absolute;left:1260.90px;top:794px;font-size:16px;line-height:16px;font-weight:normal;color:#222222;white-space:pre;transform:scaleX(1.1039);transform-origin:0 0;">11/11/2022</div>
<div style="position:absolute;left:289.70px;top:839px;font-size:16px;line-height:16px;font-weight:normal;color:#222222;white-space:pre;transform:scaleX(1.0000);transform-origin:0 0;">johndoe22</div>
<div style="position:absolute;left:531.52px;top:839px;font-size:16px;line-height:16px;font-weight:bold;color:#007a00;white-space:pre;transform:scaleX(0.9574);transform-origin:0 0;">Active</div>
<div style="position:absolute;left:903.87px;top:837px;font-size:19px;line-height:19px;font-weight:normal;color:#222222;white-space:pre;transform:scaleX(0.9260);transform-origin:0 0;">*****</div>
<div style="position:absolute;left:938.75px;top:839px;font-size:16px;line-height:16px;font-weight:normal;color:#222222;white-space:pre;transform:scaleX(1.0015);transform-origin:0 0;">5470</div>
<div style="position:absolute;left:1260.16px;top:839px;font-size:16px;line-height:16px;font-weight:normal;color:#222222;white-space:pre;transform:scaleX(1.0817);transform-origin:0 0;">06/11/2022</div>
<div style="position:absolute;left:267.15px;top:885px;font-size:16px;line-height:16px;font-weight:normal;color:#222222;white-space:pre;transform:scaleX(1.0151);transform-origin:0 0;">testuser123</div>
<div style="position:absolute;left:531.52px;top:885px;font-size:16px;line-height:16px;font-weight:bold;color:#007a00;white-space:pre;transform:scaleX(0.9574);transform-origin:0 0;">Active</div>
<div style="position:absolute;left:902.97px;top:882px;font-size:19px;line-height:19px;font-weight:normal;color:#222222;white-space:pre;transform:scaleX(0.9178);transform-origin:0 0;">*****</div>
<div style="position:absolute;left:937.88px;top:884px;font-size:16px;line-height:16px;font-weight:normal;color:#222222;white-space:pre;transform:scaleX(0.9235);transform-origin:0 0;">1221</div>
<div style="position:absolute;left:1260.16px;top:884px;font-size:16px;line-height:16px;font-weight:normal;color:#222222;white-space:pre;transform:scaleX(1.0817);transform-origin:0 0;">02/11/2022</div>
<div style="position:absolute;left:266.88px;top:929px;font-size:16px;line-height:16px;font-weight:normal;color:#222222;white-space:pre;transform:scaleX(1.0435);transform-origin:0 0;">adminsmith</div>
<div style="position:absolute;left:531.52px;top:930px;font-size:16px;line-height:16px;font-weight:bold;color:#007a00;white-space:pre;transform:scaleX(0.9574);transform-origin:0 0;">Active</div>
<div style="position:absolute;left:902.97px;top:927px;font-size:19px;line-height:19px;font-weight:normal;color:#222222;white-space:pre;transform:scaleX(0.9178);transform-origin:0 0;">*****</div>
<div style="position:absolute;left:937.85px;top:929px;font-size:16px;line-height:16px;font-weight:normal;color:#222222;white-space:pre;transform:scaleX(0.9985);transform-origin:0 0;">5470</div>
<div style="position:absolute;left:1260.16px;top:929px;font-size:16px;line-height:16px;font-weight:normal;color:#222222;white-space:pre;transform:scaleX(1.0817);transform-origin:0 0;">06/11/2022</div>
<div style="position:absolute;left:266.88px;top:974px;font-size:16px;line-height:16px;font-weight:normal;color:#222222;white-space:pre;transform:scaleX(1.0435);transform-origin:0 0;">adminsmith</div>
<div style="position:absolute;left:531.52px;top:976px;font-size:16px;line-height:16px;font-weight:bold;color:#007a00;white-space:pre;transform:scaleX(0.9574);transform-origin:0 0;">Active</div>
<div style="position:absolute;left:902.97px;top:972px;font-size:19px;line-height:19px;font-weight:normal;color:#222222;white-space:pre;transform:scaleX(0.9178);transform-origin:0 0;">*****</div>
<div style="position:absolute;left:937.88px;top:974px;font-size:16px;line-height:16px;font-weight:normal;color:#222222;white-space:pre;transform:scaleX(0.9235);transform-origin:0 0;">1221</div>
<div style="position:absolute;left:1260.16px;top:974px;font-size:16px;line-height:16px;font-weight:normal;color:#222222;white-space:pre;transform:scaleX(1.0817);transform-origin:0 0;">02/11/2022</div>
<div style="position:absolute;left:266.88px;top:1018px;font-size:16px;line-height:16px;font-weight:normal;color:#222222;white-space:pre;transform:scaleX(1.0435);transform-origin:0 0;">adminsmith</div>
<div style="position:absolute;left:531.52px;top:1022px;font-size:16px;line-height:16px;font-weight:bold;color:#007a00;white-space:pre;transform:scaleX(0.9574);transform-origin:0 0;">Active</div>
<div style="position:absolute;left:901.77px;top:1017px;font-size:19px;line-height:19px;font-weight:normal;color:#222222;white-space:pre;transform:scaleX(0.9260);transform-origin:0 0;">*****</div>
<div style="position:absolute;left:936.65px;top:1019px;font-size:16px;line-height:16px;font-weight:normal;color:#222222;white-space:pre;transform:scaleX(1.0015);transform-origin:0 0;">5470</div>
<div style="position:absolute;left:1260.16px;top:1019px;font-size:16px;line-height:16px;font-weight:normal;color:#222222;white-space:pre;transform:scaleX(1.0817);transform-origin:0 0;">02/11/2022</div>
<div style="position:absolute;left:266.88px;top:1069px;font-size:16px;line-height:16px;font-weight:normal;color:#222222;white-space:pre;transform:scaleX(1.0435);transform-origin:0 0;">adminsmith</div>
<div style="position:absolute;left:531.52px;top:1069px;font-size:16px;line-height:16px;font-weight:bold;color:#007a00;white-space:pre;transform:scaleX(0.9574);transform-origin:0 0;">Active</div>
<div style="position:absolute;left:901.77px;top:1067px;font-size:19px;line-height:19px;font-weight:normal;color:#222222;white-space:pre;transform:scaleX(0.9260);transform-origin:0 0;">*****</div>
<div style="position:absolute;left:936.39px;top:1069px;font-size:16px;line-height:16px;font-weight:normal;color:#222222;white-space:pre;transform:scaleX(1.0147);transform-origin:0 0;">1220</div>
<div style="position:absolute;left:1260.17px;top:1069px;font-size:16px;line-height:16px;font-weight:normal;color:#222222;white-space:pre;transform:scaleX(1.0646);transform-origin:0 0;">06/12/2022</div>
<div style="position:absolute;left:266.74px;top:751px;font-size:16px;line-height:16px;font-weight:bold;color:#00b4e6;white-space:pre;transform:scaleX(0.9555);transform-origin:0 0;">johndoe22</div>
<div style="position:absolute;left:347.34px;top:751px;font-size:16px;line-height:16px;font-weight:normal;color:#222222;white-space:pre;transform:scaleX(1.0648);transform-origin:0 0;">(2)</div>
</body></html>
